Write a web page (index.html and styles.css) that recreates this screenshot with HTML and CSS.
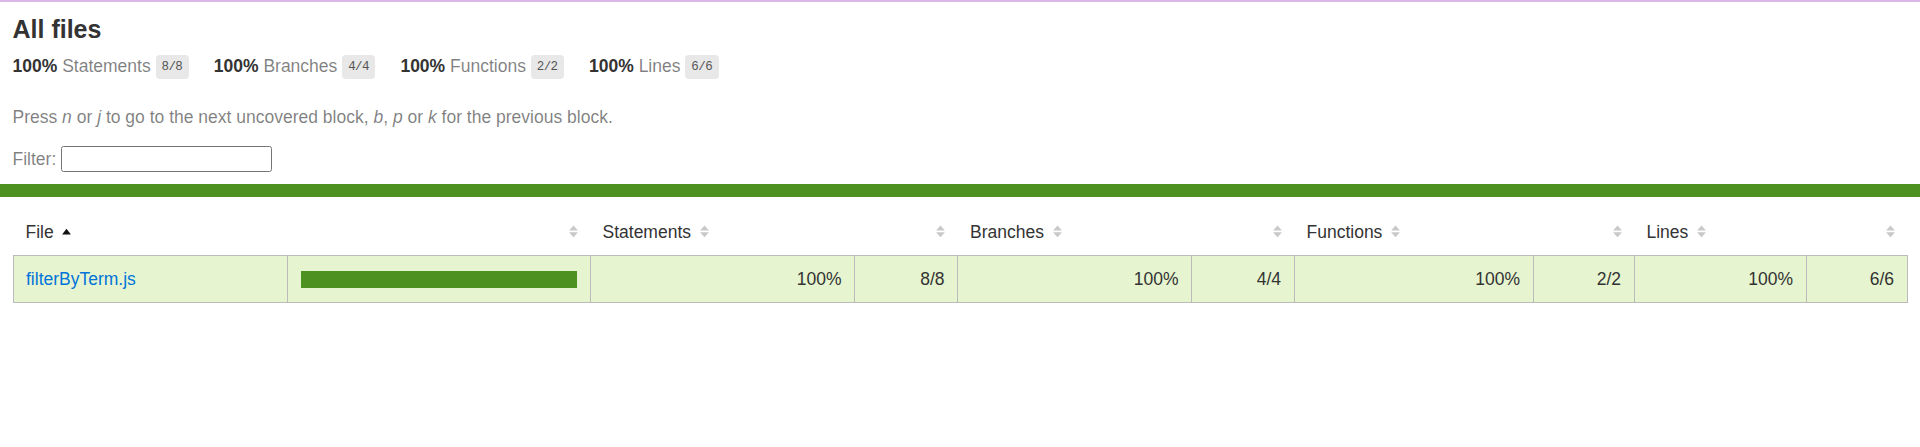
FILE: index.html
```html
<!DOCTYPE html>
<html lang="en">
<head>
<meta charset="utf-8">
<title>Code coverage report for All files</title>
<link rel="stylesheet" href="styles.css">
</head>
<body>
<div class="wrapper">
  <div class="pad1">
    <h1>All files</h1>
    <div class="summary">
      <div class="stat"><span class="strong">100% </span> <span class="quiet">Statements</span> <span class="fraction">8/8</span></div>
      <div class="stat"><span class="strong">100% </span> <span class="quiet">Branches</span> <span class="fraction">4/4</span></div>
      <div class="stat"><span class="strong">100% </span> <span class="quiet">Functions</span> <span class="fraction">2/2</span></div>
      <div class="stat"><span class="strong">100% </span> <span class="quiet">Lines</span> <span class="fraction">6/6</span></div>
    </div>
    <p class="quiet hint">Press <em>n</em> or <em>j</em> to go to the next uncovered block, <em>b</em>, <em>p</em> or <em>k</em> for the previous block.</p>
    <div class="quiet filter">Filter: <input type="search" class="search"></div>
  </div>
  <div class="status-line high"></div>
  <div class="pad1">
    <table class="coverage-summary">
      <colgroup>
        <col class="c-file">
        <col class="c-pic">
        <col class="c-pct1">
        <col class="c-abs1">
        <col class="c-pct2">
        <col class="c-abs2">
        <col class="c-pct3">
        <col class="c-abs3">
        <col class="c-pct4">
        <col class="c-abs4">
      </colgroup>
      <thead>
        <tr>
          <th class="file sorted">File<span class="sorter"><svg viewBox="0 0 7 10" width="9" height="12.5"><polygon points="0,7.5 3.5,3 7,7.5" fill="#111"/></svg></span></th>
          <th class="pic"><span class="sorter"><svg viewBox="0 0 7 10" width="9" height="12.5"><polygon points="0,4.3 3.5,0.3 7,4.3" fill="#c8c8c8"/><polygon points="0,5.7 7,5.7 3.5,9.7" fill="#c8c8c8"/></svg></span></th>
          <th class="pct">Statements<span class="sorter"><svg viewBox="0 0 7 10" width="9" height="12.5"><polygon points="0,4.3 3.5,0.3 7,4.3" fill="#c8c8c8"/><polygon points="0,5.7 7,5.7 3.5,9.7" fill="#c8c8c8"/></svg></span></th>
          <th class="abs"><span class="sorter"><svg viewBox="0 0 7 10" width="9" height="12.5"><polygon points="0,4.3 3.5,0.3 7,4.3" fill="#c8c8c8"/><polygon points="0,5.7 7,5.7 3.5,9.7" fill="#c8c8c8"/></svg></span></th>
          <th class="pct">Branches<span class="sorter"><svg viewBox="0 0 7 10" width="9" height="12.5"><polygon points="0,4.3 3.5,0.3 7,4.3" fill="#c8c8c8"/><polygon points="0,5.7 7,5.7 3.5,9.7" fill="#c8c8c8"/></svg></span></th>
          <th class="abs"><span class="sorter"><svg viewBox="0 0 7 10" width="9" height="12.5"><polygon points="0,4.3 3.5,0.3 7,4.3" fill="#c8c8c8"/><polygon points="0,5.7 7,5.7 3.5,9.7" fill="#c8c8c8"/></svg></span></th>
          <th class="pct">Functions<span class="sorter"><svg viewBox="0 0 7 10" width="9" height="12.5"><polygon points="0,4.3 3.5,0.3 7,4.3" fill="#c8c8c8"/><polygon points="0,5.7 7,5.7 3.5,9.7" fill="#c8c8c8"/></svg></span></th>
          <th class="abs"><span class="sorter"><svg viewBox="0 0 7 10" width="9" height="12.5"><polygon points="0,4.3 3.5,0.3 7,4.3" fill="#c8c8c8"/><polygon points="0,5.7 7,5.7 3.5,9.7" fill="#c8c8c8"/></svg></span></th>
          <th class="pct">Lines<span class="sorter"><svg viewBox="0 0 7 10" width="9" height="12.5"><polygon points="0,4.3 3.5,0.3 7,4.3" fill="#c8c8c8"/><polygon points="0,5.7 7,5.7 3.5,9.7" fill="#c8c8c8"/></svg></span></th>
          <th class="abs"><span class="sorter"><svg viewBox="0 0 7 10" width="9" height="12.5"><polygon points="0,4.3 3.5,0.3 7,4.3" fill="#c8c8c8"/><polygon points="0,5.7 7,5.7 3.5,9.7" fill="#c8c8c8"/></svg></span></th>
        </tr>
      </thead>
      <tbody>
        <tr class="high">
          <td class="file"><a href="#">filterByTerm.js</a></td>
          <td class="pic"><div class="chart"><div class="cover-fill" style="width: 100%"></div></div></td>
          <td class="pct">100%</td>
          <td class="abs">8/8</td>
          <td class="pct">100%</td>
          <td class="abs">4/4</td>
          <td class="pct">100%</td>
          <td class="abs">2/2</td>
          <td class="pct">100%</td>
          <td class="abs">6/6</td>
        </tr>
      </tbody>
    </table>
  </div>
</div>
</body>
</html>
```

FILE: styles.css
```css
*, *::before, *::after { box-sizing: border-box; }

html, body { margin: 0; padding: 0; }

body {
  font-family: "Liberation Sans", Arial, Helvetica, sans-serif;
  font-size: 17.5px;
  color: #333;
  background: #fff;
  border-top: 2px solid #d9b8e8;
}

h1 { font-size: 25px; margin: 0; }

.pad1 { padding: 12.5px; }

.summary { display: flex; }
.stat { padding: 12.5px 25px 12.5px 0; }

.strong { font-weight: bold; }
.quiet { color: rgba(0, 0, 0, 0.5); }

.fraction {
  font-family: "Liberation Mono", "DejaVu Sans Mono", monospace;
  font-size: 12.5px;
  letter-spacing: -0.6px;
  color: #555;
  background: #e8e8e8;
  padding: 5px 6.5px 5px 6px;
  border-radius: 3.75px;
  vertical-align: middle;
}

.hint { margin: 17.5px 0; }

.search {
  width: 211px;
  height: 26px;
  margin: 0;
  border: 1px solid #767676;
  border-radius: 2.5px;
  padding: 1px 2.5px;
  font: inherit;
  background: #fff;
}

.status-line { height: 12.5px; }
.status-line.high { background: rgb(77, 146, 33); }

a { color: #0074d9; text-decoration: none; }

.coverage-summary {
  border-collapse: collapse;
  width: 100%;
  table-layout: fixed;
}

.c-file { width: 274.5px; }
.c-pic { width: 302.5px; }
.c-pct1 { width: 264.5px; }
.c-abs1 { width: 103px; }
.c-pct2 { width: 234px; }
.c-abs2 { width: 102.5px; }
.c-pct3 { width: 239px; }
.c-abs3 { width: 101px; }
.c-pct4 { width: 172px; }
.c-abs4 { width: 101px; }

.coverage-summary tr { border-bottom: 1px solid #bbb; }
.coverage-summary tbody { border: 1px solid #bbb; }
.coverage-summary td,
.coverage-summary th { padding: 12.5px; }
.coverage-summary td { border-right: 1px solid #bbb; }
.coverage-summary td:last-child { border-right: none; }

.coverage-summary th {
  text-align: left;
  font-weight: normal;
  white-space: nowrap;
}

.coverage-summary th.pic,
.coverage-summary th.abs,
.coverage-summary td.pct,
.coverage-summary td.abs { text-align: right; }

.coverage-summary td.file { white-space: nowrap; }

.sorter {
  display: inline-block;
  width: 9px;
  height: 12.5px;
  margin-left: 0.5em;
}
.sorter svg { display: block; }

.high { background: rgb(230, 245, 208); }

.chart {
  line-height: 0;
  border: 1px solid rgb(77, 146, 33);
}
.cover-fill {
  display: inline-block;
  height: 15px;
  background: rgb(77, 146, 33);
}
```
